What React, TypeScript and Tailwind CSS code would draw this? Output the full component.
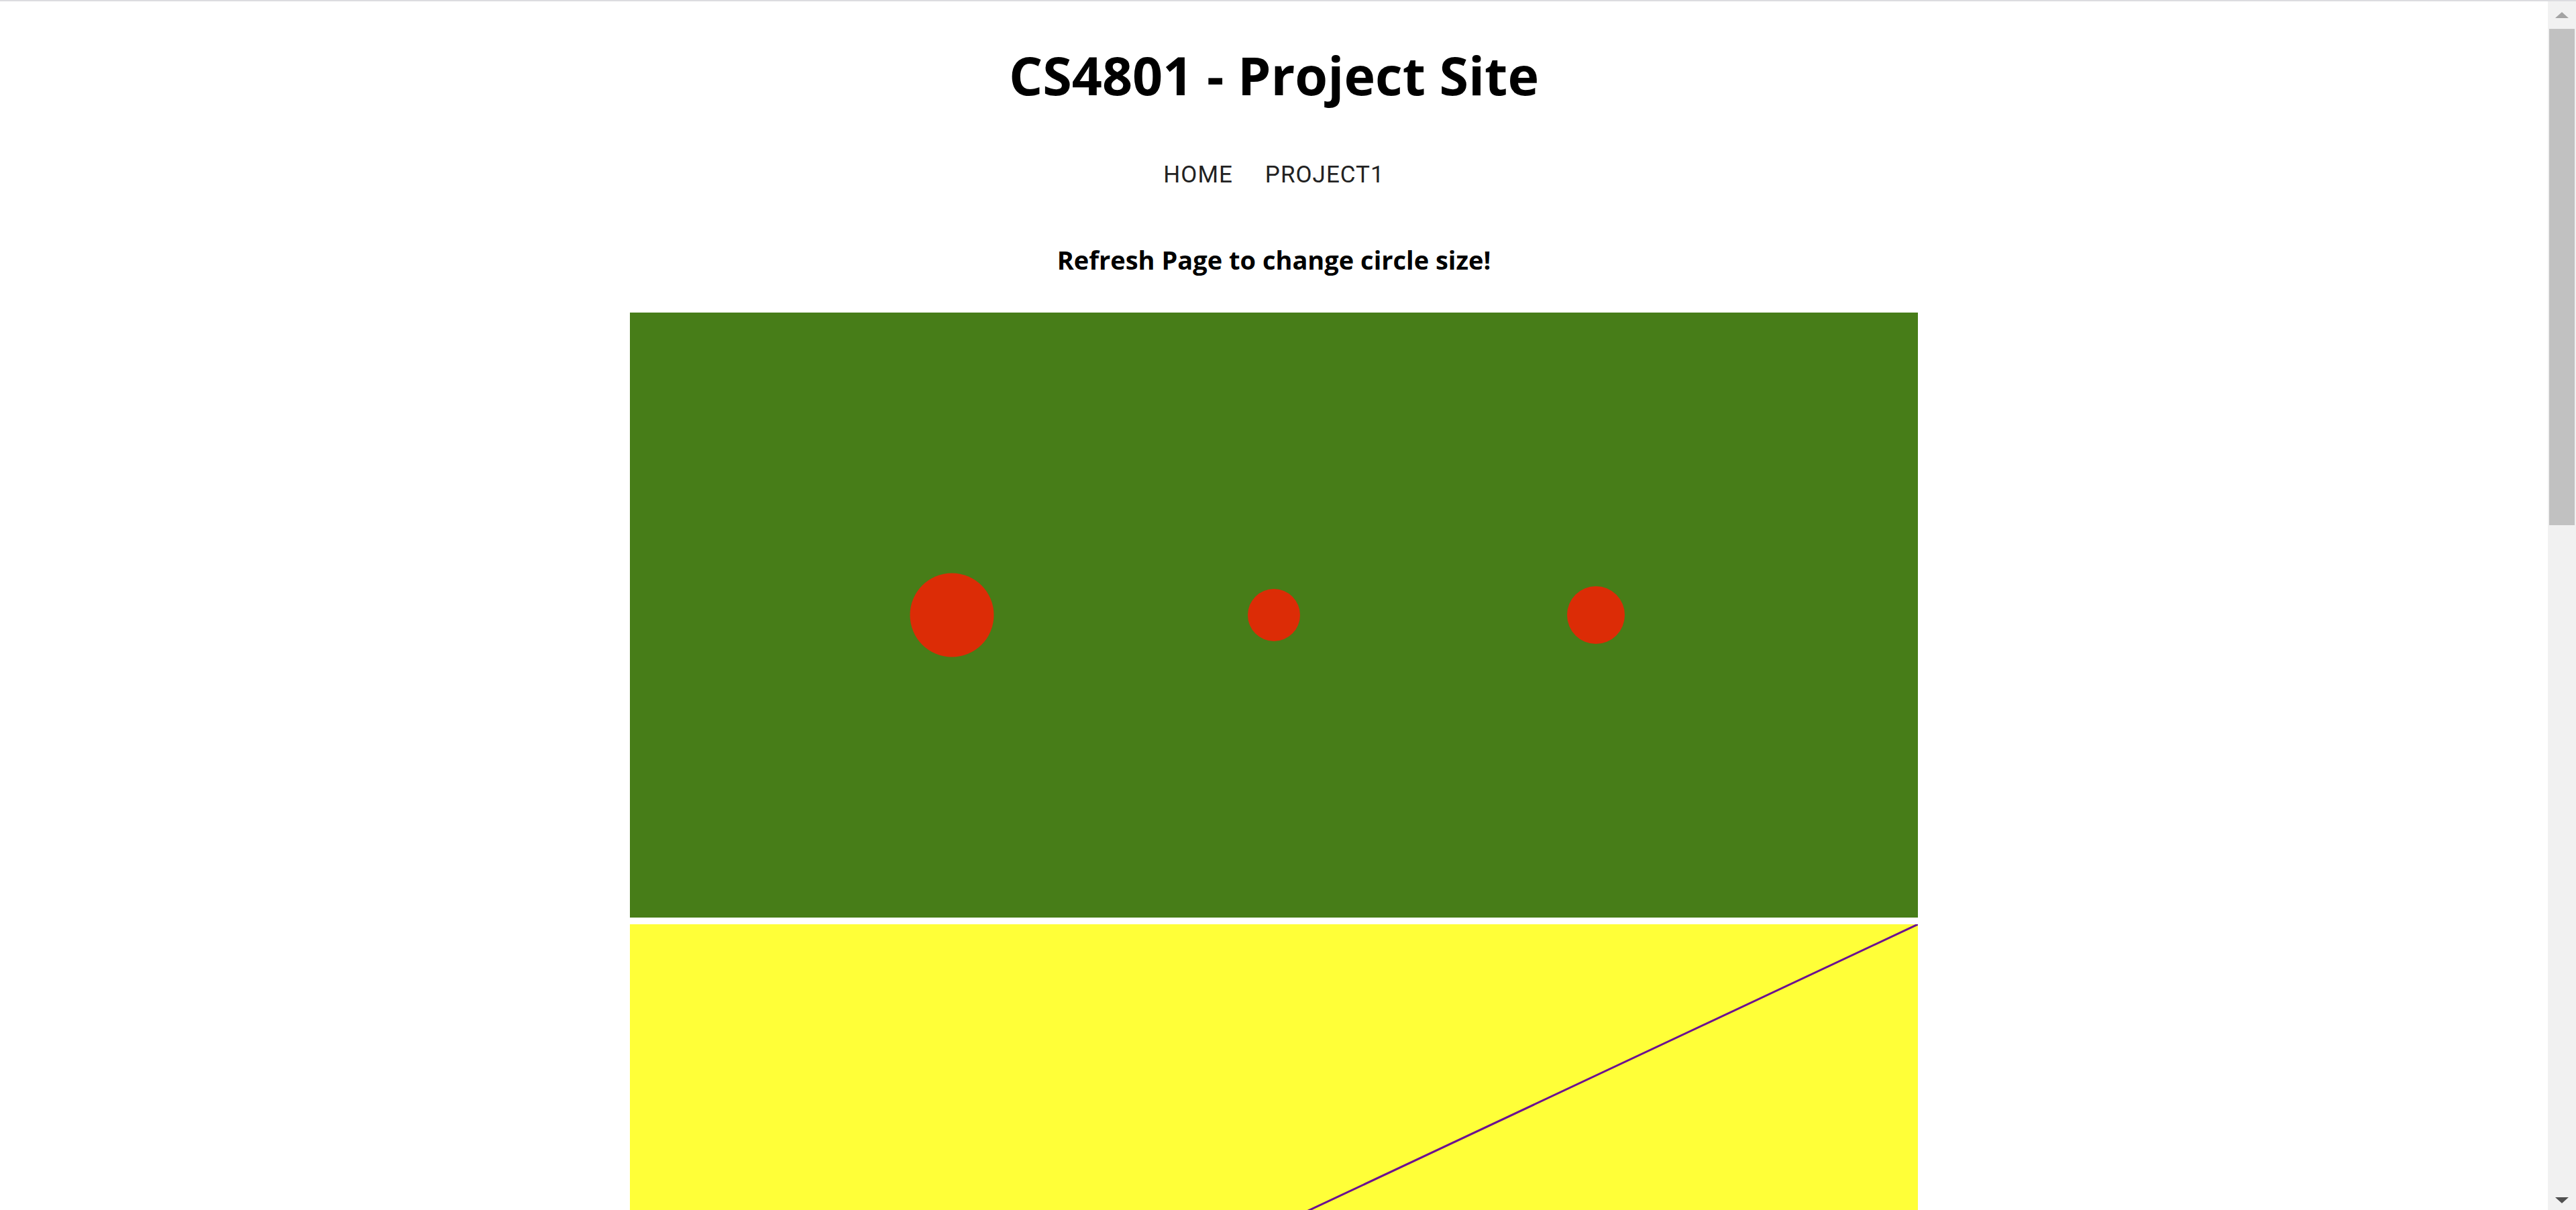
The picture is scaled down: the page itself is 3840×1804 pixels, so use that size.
import React from 'react';

const CANVAS_W = 1920;
const CANVAS_H = 902;

// circles drawn on the first canvas (radius in canvas px)
const circles = [
	{ cx: CANVAS_W / 4, r: 62.5 },
	{ cx: CANVAS_W / 2, r: 39 },
	{ cx: (CANVAS_W * 3) / 4, r: 43 },
];

function CircleCanvas() {
	return (
		<svg
			width={CANVAS_W}
			height={CANVAS_H}
			viewBox={`0 0 ${CANVAS_W} ${CANVAS_H}`}
			className="block"
		>
			<rect width={CANVAS_W} height={CANVAS_H} fill="#477d18" />
			{circles.map((c, i) => (
				<circle key={i} cx={c.cx} cy={CANVAS_H / 2} r={c.r} fill="#dc2c06" />
			))}
		</svg>
	);
}

function LineCanvas() {
	return (
		<svg
			width={CANVAS_W}
			height={CANVAS_H}
			viewBox={`0 0 ${CANVAS_W} ${CANVAS_H}`}
			className="block"
		>
			<rect width={CANVAS_W} height={CANVAS_H} fill="#ffff38" />
			<line
				x1={CANVAS_W}
				y1={0}
				x2={0}
				y2={CANVAS_H}
				stroke="#6c1190"
				strokeWidth={3}
			/>
		</svg>
	);
}

function Scrollbar() {
	return (
		<div className="flex h-full w-[42px] shrink-0 flex-col bg-[#f1f1f1]">
			<div className="flex h-[41px] items-center justify-center">
				<div className="h-0 w-0 border-x-[10px] border-b-[9px] border-x-transparent border-b-[#a3a3a3]" />
			</div>
			<div className="mx-[2px] h-[740px] bg-[#c1c1c1]" />
			<div className="flex-1" />
			<div className="flex h-[29px] items-center justify-center">
				<div className="h-0 w-0 border-x-[10px] border-t-[9px] border-x-transparent border-t-[#505050]" />
			</div>
		</div>
	);
}

export default function App() {
	return (
		<div className="flex h-[1804px] w-[3840px] flex-col overflow-hidden bg-white">
			<div className="h-[2px] w-full shrink-0 bg-[#dcdce0]" />
			<div className="flex min-h-0 flex-1 flex-row">
				<main className="flex min-w-0 flex-1 flex-col items-center overflow-hidden">
					<h1 className="pt-[70px] text-[79px] leading-[80px] font-bold text-black [font-family:'Open_Sans',sans-serif]">
						CS4801 - Project Site
					</h1>
					<nav className="mt-[91px] flex flex-row gap-[48px] text-[35px] leading-[35px] tracking-[1px] text-[#222] [font-family:Roboto,sans-serif]">
						<a href="#">HOME</a>
						<a href="#">PROJECT1</a>
					</nav>
					<h3 className="mt-[90px] text-[38px] leading-[38px] font-bold text-black [font-family:'Open_Sans',sans-serif]">
						Refresh Page to change circle size!
					</h3>
					<div className="mt-[60px] flex flex-col gap-[10px]">
						<CircleCanvas />
						<LineCanvas />
					</div>
				</main>
				<Scrollbar />
			</div>
		</div>
	);
}
